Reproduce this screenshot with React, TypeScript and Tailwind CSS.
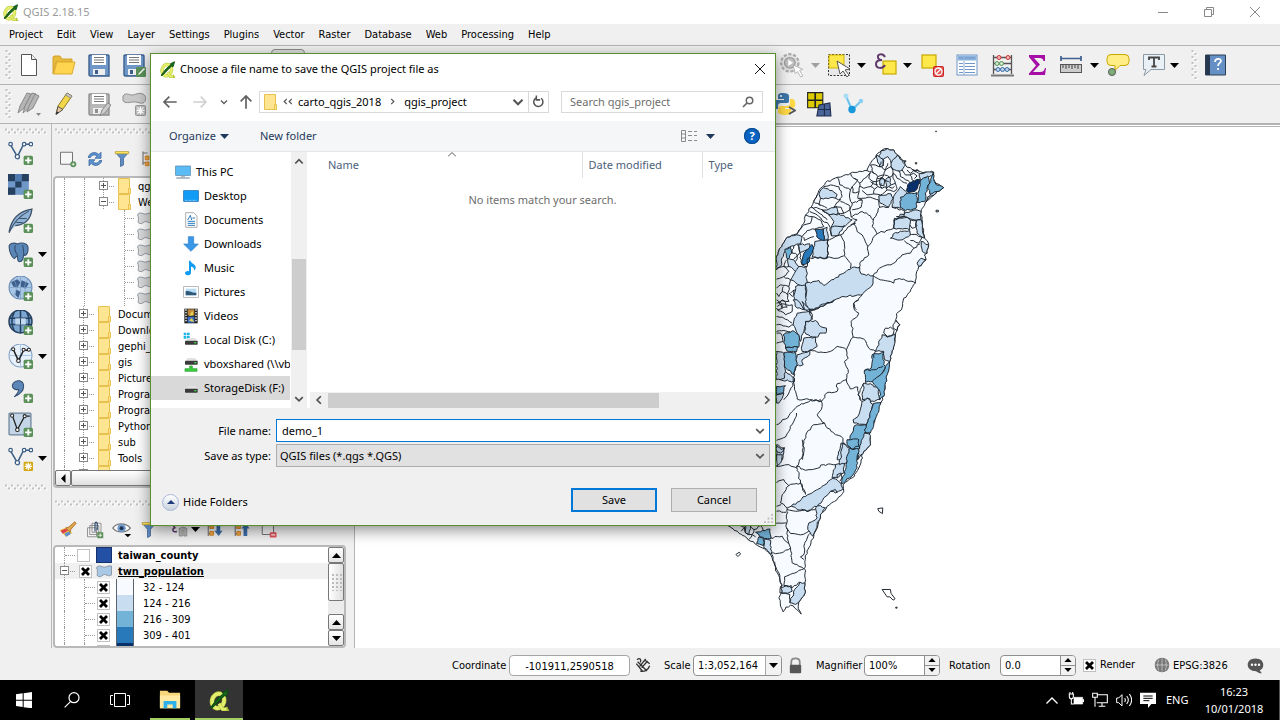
import React, { useState } from "react";

const TAHOMA = "font-['DejaVu_Sans_Condensed','DejaVu_Sans',sans-serif]";
const SEGOE = "font-['Noto_Sans','Open_Sans',sans-serif]";

type P = { children?: React.ReactNode; className?: string };

function Svg({ children, className = "size-6" }: P) {
  return (
    <svg viewBox="0 0 24 24" fill="none" className={className + " shrink-0"} aria-hidden="true">
      {children}
    </svg>
  );
}

function Plus() {
  return (
    <g>
      <rect x="15" y="15" width="9" height="9" rx="1.5" fill="#5b9158" />
      <path d="M19.5 16.5v6M16.5 19.5h6" stroke="#fff" strokeWidth="1.8" />
    </g>
  );
}

function GripV() {
  return (
    <svg className="h-[30px] w-[7px] shrink-0" viewBox="0 0 7 30" aria-hidden="true">
      <path d="M2.5 1v29M5.5 4v26" stroke="#fff" strokeWidth="2" strokeDasharray="2 4" />
      <path d="M1.5 0v30M4.5 3v27" stroke="#c2c2c2" strokeWidth="2" strokeDasharray="2 4" />
    </svg>
  );
}

function GripH({ className = "" }: P) {
  return (
    <svg className={"h-[7px] shrink-0 " + className} aria-hidden="true">
      <line x1="1" y1="2.5" x2="400" y2="2.5" stroke="#fff" strokeWidth="2" strokeDasharray="2 4" />
      <line x1="4" y1="5.5" x2="400" y2="5.5" stroke="#fff" strokeWidth="2" strokeDasharray="2 4" />
      <line x1="0" y1="1.5" x2="400" y2="1.5" stroke="#c2c2c2" strokeWidth="2" strokeDasharray="2 4" />
      <line x1="3" y1="4.5" x2="400" y2="4.5" stroke="#c2c2c2" strokeWidth="2" strokeDasharray="2 4" />
    </svg>
  );
}

function Caret({ className = "text-black" }: P) {
  return (
    <svg viewBox="0 0 9 5" className={"h-[5px] w-[9px] shrink-0 " + className} aria-hidden="true">
      <path d="M0 0h9L4.500 5z" fill="currentColor" />
    </svg>
  );
}

function Chevron({ dir, className = "size-2" }: { dir: "up" | "down" | "left" | "right"; className?: string }) {
  const d = {
    up: "M1 6l3-3 3 3",
    down: "M1 2.500l3 3 3-3",
    left: "M5.500 1l-3 3 3 3",
    right: "M2.500 1l3 3-3 3",
  }[dir];
  return (
    <svg viewBox="0 0 8 8" fill="none" className={className + " shrink-0"} aria-hidden="true">
      <path d={d} stroke="currentColor" strokeWidth="1.4" />
    </svg>
  );
}

function QgisLogo({ className = "size-4" }: P) {
  return (
    <Svg className={className}>
      <ellipse cx="11" cy="13" rx="6.500" ry="8" transform="rotate(15 11 13)" stroke="#b3c23c" strokeWidth="5" />
      <ellipse cx="11" cy="13" rx="6.500" ry="8" transform="rotate(15 11 13)" stroke="#e3ee6c" strokeWidth="3.800" />
      <path d="M12 16l4 6h4l-1-2" stroke="#b3c23c" strokeWidth="4" />
      <path d="M12 16l4 6h4" stroke="#e3ee6c" strokeWidth="2.800" />
      <path d="M3 20l1 1 9-9 5-5 2 1 2-7-6 3 1 1-7 6z" fill="#176b1c" stroke="#0d4d12" strokeWidth="1.200" />
    </Svg>
  );
}

function Folder({ className = "size-4" }: P) {
  return (
    <svg viewBox="0 0 16 16" className={className + " shrink-0"} aria-hidden="true">
      <path d="M1.500.5h11v11h1v4h-12z" fill="#ffe591" stroke="#e8c24f" />
      <path d="M11.500 15.500v-5h2v5z" fill="#ffe28a" stroke="#e8c24f" />
    </svg>
  );
}

/* ---------- toolbars ---------- */

const floppy = (c: string, d: string) => (
  <g>
    <path d="M2 3q0-1 1-1h18q1 0 1 1v20H3l-1-1z" fill={c} stroke={d} strokeWidth="1.4" />
    <path d="M5 2h14v10H5z" fill="#fff" />
    <path d="M7 4.500h10M7 7h10M7 9.500h10" stroke="#777" strokeWidth="1.200" />
    <path d="M6 16h12v6H6z" fill="#eee" />
    <path d="M8 17h3v4H8z" fill={d} />
  </g>
);

function ToolButton({ label, children, className = "w-[35px]" }: P & { label: string }) {
  return (
    <button type="button" aria-label={label} className={"flex shrink-0 items-center justify-center " + className}>
      {children}
    </button>
  );
}

function ToolbarOne() {
  return (
    <div className="flex h-[39px] items-center border-b border-[#b4b4b4] bg-[#f0f0f0] pl-[5px]">
      <GripV />
      <div className="-ml-px flex">
        <ToolButton label="New project">
          <Svg><path d="M4.500 1.500h10l5 5v16h-15z" fill="#fff" stroke="#555" /><path d="M14.500 1.500v5h5" stroke="#555" fill="#eee" /></Svg>
        </ToolButton>
        <ToolButton label="Open project">
          <Svg><path d="M1 21V4l1-1h6l2 3h10v3H4z" fill="#e9bb3c" stroke="#d4a22a" /><path d="M1.500 21L5 9h18l-3 12z" fill="#ffd44f" stroke="#dcaa30" /></Svg>
        </ToolButton>
        <ToolButton label="Save project"><Svg>{floppy("#6f97c8", "#3c5f8d")}</Svg></ToolButton>
        <ToolButton label="Save project as">
          <Svg>{floppy("#6f97c8", "#3c5f8d")}<rect x="14" y="14" width="10" height="10" rx="1" fill="#5b9158" /><path d="M16 22l1-2 5-5 1 1-5 5z" fill="#fff" /></Svg>
        </ToolButton>
      </div>
      <div className="ml-[120px] h-8 w-[34px] rounded border border-[#8c8c8c] bg-[#dcdcdc]" />
      <div className="flex flex-1 items-center pl-[473px]">
        <ToolButton label="Run feature action" className="w-7">
          <Svg className="size-[26px]">
            <circle cx="10" cy="10" r="8" fill="#e3e3e3" stroke="#aaa" strokeWidth="2" strokeDasharray="3 1.500" />
            <circle cx="10" cy="10" r="5" fill="#bdbdbd" stroke="#999" /><path d="M8.500 7l4.500 3-4.500 3z" fill="#fff" />
            <path d="M13 12l9 4-3 1 3 5-2 1-3-5-2 2z" fill="#fff" stroke="#aaa" strokeWidth=".8" />
          </Svg>
        </ToolButton>
        <span className="flex w-[18px] justify-center"><Caret className="text-[#a0a0a0]" /></span>
        <ToolButton label="Select features" className="w-[30px]">
          <Svg>
            <rect x="1.500" y="1.500" width="21" height="21" fill="#e8e8e8" stroke="#333" strokeDasharray="2 1.500" />
            <path d="M2 2h15v13H2z" fill="#ffe94a" stroke="#d3b300" />
            <path d="M10 8l13 8-5 1 4 5-2 2-4-6-3 3z" fill="#fff" stroke="#555" />
          </Svg>
        </ToolButton>
        <span className="flex w-[14px] justify-center"><Caret /></span>
        <ToolButton label="Select by expression" className="w-[35px]">
          <Svg>
            <rect x="9" y="8" width="13" height="13" fill="#ffe94a" stroke="#c9a800" strokeWidth="1.200" />
            <path d="M11 4C9 0 3 1 4 4c0 2 2 3 4 3-4 0-6 2-6 4 0 5 7 5 9 1" stroke="#5f3a6b" strokeWidth="2" />
          </Svg>
        </ToolButton>
        <span className="flex w-[9px] justify-center"><Caret /></span>
        <ToolButton label="Deselect features" className="w-10">
          <Svg>
            <rect x="2" y="2" width="14" height="13" fill="#ffe94a" stroke="#c9a800" strokeWidth="1.200" />
            <rect x="13.500" y="13.500" width="10" height="10" rx="1" fill="#e05252" stroke="#c22" /><circle cx="18.500" cy="18.500" r="3.500" stroke="#fff" strokeWidth="1.300" /><path d="M16 21l5-5" stroke="#fff" strokeWidth="1.300" />
          </Svg>
        </ToolButton>
        <ToolButton label="Open attribute table" className="w-[29px]">
          <Svg>
            <rect x="2" y="2" width="20" height="20" fill="#fff" stroke="#6f97c8" /><rect x="2.500" y="2.500" width="19" height="5" fill="#8db3dd" />
            <path d="M4 5h4M10 5h10M4 10.500h4M10 10.500h10M4 13.500h4M10 13.500h10M4 16.500h4M10 16.500h10M4 19.500h4M10 19.500h10" stroke="#6f97c8" strokeWidth="1.200" /><path d="M9 8v14" stroke="#6f97c8" strokeWidth=".8" />
          </Svg>
        </ToolButton>
        <ToolButton label="Field calculator" className="w-[41px]">
          <Svg>
            <path d="M3.500 2v19M21.500 2v19M3 4.500h19M3 10.500h19M3 16.500h19" stroke="#555" strokeWidth="1.300" /><path d="M1 21.500h23v2H1z" fill="#777" />
            <g fill="#f4b4b4" stroke="#c33"><circle cx="9" cy="4.500" r="2" /><circle cx="18" cy="4.500" r="2" /></g>
            <g fill="#cdeacd" stroke="#5a9557"><circle cx="7" cy="10.500" r="2" /><circle cx="11.500" cy="10.500" r="2" /></g>
            <g fill="#b9d3ee" stroke="#3c6ea8"><circle cx="8" cy="16.500" r="2" /><circle cx="12.500" cy="16.500" r="2" /><circle cx="17" cy="16.500" r="2" /></g>
          </Svg>
        </ToolButton>
        <ToolButton label="Statistical summary" className="w-[29px]">
          <Svg><path d="M4 2h16v6h-1.500c-.5-2-1.500-3-4-3H9l6 6.500L8 19h7c3 0 4-1 5-4h1l-1 7H4v-1.500l7-8L4 4z" fill="#a50fa5" /></Svg>
        </ToolButton>
        <ToolButton label="Measure" className="w-[39px]">
          <Svg>
            <path d="M2 5.500h20M2 3v5M22 3v5" stroke="#3c5f8d" strokeWidth="1.700" /><rect x="1.500" y="11.500" width="21" height="8" fill="#ccc" stroke="#555" />
            <path d="M4 12v3M7 12v4M10 12v3M13 12v4M16 12v3M19 12v4" stroke="#444" />
          </Svg>
        </ToolButton>
        <Caret />
        <ToolButton label="Map tips" className="w-[38px]">
          <Svg><path d="M5 1.500h14q4 0 4 4v3q0 4-4 4h-5l-5 5v-5H5q-4 0-4-4v-3q0-4 4-4z" fill="#ffed86" stroke="#c9a800" /><circle cx="6" cy="19" r="3.500" fill="#7cb07a" stroke="#555" /></Svg>
        </ToolButton>
        <ToolButton label="Text annotation" className="w-[33px]">
          <Svg><path d="M1.500 1.500h21v15H9l-7 6 2-6H1.500z" fill="#e9f1f7" stroke="#8a9aa5" /><path d="M7 7V4.500h10V7M12 4.500v9M9.500 13.500h5" stroke="#444" strokeWidth="1.800" /></Svg>
        </ToolButton>
        <Caret />
        <span className="ml-3"><GripV /></span>
        <ToolButton label="Help contents">
          <Svg><path d="M1.500 2h20v20h-20z" fill="#6590c5" stroke="#2d3e55" /><path d="M2 2h4v20H2z" fill="#26384f" /><path d="M11 9c0-4 6-4 6-1 0 2-3 2-3 5M14 15v2" stroke="#fff" strokeWidth="1.700" /></Svg>
        </ToolButton>
      </div>
    </div>
  );
}

function ToolbarTwo() {
  return (
    <div className="flex h-[39px] items-center border-b border-[#b4b4b4] bg-[#f0f0f0] pl-[5px]">
      <GripV />
      <div className="-ml-px flex">
        <ToolButton label="Current edits">
          <Svg><g fill="#b5b5b5" stroke="#8a8a8a"><path d="M1 21l2-7L10 1l4 1-7 14z" /><path d="M6 21l2-7 7-13 4 1-7 14z" /><path d="M10 20l2-6 6-12 4 2-6 12z" /></g><path d="M19 21h5l-2.500 3z" fill="#888" /></Svg>
        </ToolButton>
        <ToolButton label="Toggle editing">
          <Svg><path d="M4 22l2-8L15 1l5 3-9 13z" fill="#f2d64c" stroke="#8d7a22" /><path d="M4 22.500l2-8 5 3z" fill="#e8c8a0" stroke="#555" /><path d="M4 22.500l1-3 2 1z" fill="#222" /><path d="M15 1l5 3-1.500 2-5-3z" fill="#c9c9c9" stroke="#777" strokeWidth=".7" /></Svg>
        </ToolButton>
        <ToolButton label="Save layer edits">
          <Svg>{floppy("#b8b8b8", "#8f8f8f")}<path d="M13 24l2-6 6-7 3 2-6 8z" fill="#ccc" stroke="#888" /></Svg>
        </ToolButton>
        <ToolButton label="Add feature">
          <Svg><path d="M1 4c3-4 6-1 9-1s7-3 11-1 3 8 0 9-7-2-11-1S1 11 1 8z" fill="#c9c9c9" stroke="#8f8f8f" /><rect x="13.500" y="13.500" width="10" height="10" rx="1" fill="#bbb" stroke="#999" /><path d="M18.500 14.500v8M14.500 18.500h8M15.500 15.500l6 6M21.500 15.500l-6 6" stroke="#fff" strokeWidth="1.200" /></Svg>
        </ToolButton>
      </div>
      <div className="flex flex-1 items-center pl-[615px]">
        <ToolButton label="Python console">
          <Svg>
            <path d="M11 1C6 1 6 3 6 4v3h6v1H4c-4 0-4 9 0 9h2v-3c0-2 1-3 3-3h6c2 0 2-1 2-3V4c0-2-2-3-6-3z" fill="#3c76a8" /><circle cx="9" cy="4" r="1" fill="#fff" />
            <path d="M13 23c5 0 6-2 6-3v-3h-6v-1h8c3 0 3-8 0-9h-3v4c0 2-1 3-3 3H9c-2 0-3 1-3 3v3c0 2 3 3 7 3z" fill="#ffd845" />
            <path d="M17 15l6 3.500-6 3.500" stroke="#555" strokeWidth="1.800" />
          </Svg>
        </ToolButton>
        <ToolButton label="Table manager">
          <Svg className="size-[26px]"><path d="M1.500 1.500h14v14h-14z" fill="#dccb00" stroke="#222" /><path d="M8.500 1.500v14M1.500 8.500h14" stroke="#222" strokeWidth="1.500" /><path d="M12 13l10-2 1 12H10z" fill="#4a6597" stroke="#1d2c4d" /><path d="M17 12v11M11 17h12" stroke="#1d2c4d" /></Svg>
        </ToolButton>
        <ToolButton label="Topology">
          <Svg><path d="M4 4l6 14 9-9" stroke="#6cc3ee" strokeWidth="2" /><circle cx="4" cy="4" r="2.500" fill="#a9dcf5" /><circle cx="19" cy="9" r="2.200" fill="#8acff2" /><circle cx="10" cy="17.500" r="3.700" fill="#1897db" /></Svg>
        </ToolButton>
      </div>
    </div>
  );
}

const vNodes = (
  <g>
    <path d="M2 4l7 12 6-12h8" stroke="#3d5f86" strokeWidth="1.500" />
    <g fill="#fff" stroke="#3d5f86" strokeWidth="1.200"><circle cx="2.500" cy="4" r="1.700" /><circle cx="9" cy="16" r="2" /><circle cx="15.500" cy="4" r="1.700" /><circle cx="22" cy="4" r="1.700" /></g>
  </g>
);

const sideTools: { label: string; caret?: boolean; art: React.ReactNode }[] = [
  { label: "Add vector layer", art: <>{vNodes}<Plus /></> },
  { label: "Add raster layer", art: <><path d="M0 0h20v20H0z" fill="#6f97c8" /><path d="M0 0h7v7H0zM13 0h7v7h-7zM7 7h6v6H7zM0 13h7v7H0z" fill="#26405f" /><path d="M7 0h6v7H7z" fill="#4f7aaf" /><Plus /></> },
  { label: "Add SpatiaLite layer", art: <><path d="M1 23C3 12 9 3 23 1c-1 9-5 15-16 16" fill="#8fb2d8" stroke="#3c5066" strokeWidth="1.200" /><path d="M1 24C5 14 12 7 20 3M8 14h6M11 10h7" stroke="#3c5066" /><Plus /></> },
  { label: "Add PostGIS layer", caret: true, art: <><path d="M1 4c1-4 6-3 8-2 4-2 9-1 10 2 1 5-1 9-3 9l-1-2c0 5-1 8-4 8-2 0-2-3-2-6l-3 3C3 14 1 8 1 4z" fill="#5a86b8" stroke="#34506f" /><path d="M7 3c-1 4 0 7 2 9M14 3c1 3 1 6 1 8" stroke="#34506f" /><Plus /></> },
  { label: "Add WMS layer", caret: true, art: <><circle cx="12" cy="11" r="11" fill="#a8c6e6" stroke="#6486ad" /><path d="M3 6l6-3 3 3-3 5-4-1zM13 4l7 3-3 5-5-2zM8 13l4 2-2 6-3-3z" fill="#3c5f8d" /><path d="M12 0v22M1 11h22M5 3c4 5 4 11 0 16M19 3c-4 5-4 11 0 16" stroke="#7f9fc4" strokeWidth=".7" /><Plus /></> },
  { label: "Add WCS layer", art: <><circle cx="12" cy="11" r="11" fill="#7ea6d2" stroke="#26405f" strokeWidth="1.500" /><path d="M1 8h22M1 14h22M12 0v22M6 2c-3 6-3 12 0 18M18 2c3 6 3 12 0 18" stroke="#26405f" strokeWidth="1.500" /><path d="M7 8h10v6H7z" fill="#c3d9ef" /><path d="M12 8v6" stroke="#26405f" /><Plus /></> },
  { label: "Add WFS layer", caret: true, art: <><circle cx="12" cy="11" r="11" fill="#e8f1fa" stroke="#7f9fc4" /><path d="M12 0v22M1 11h22" stroke="#a8c6e6" /><path d="M5 5l5 11 5-10h4" stroke="#222" strokeWidth="1.500" /><g fill="#fff" stroke="#222"><circle cx="5" cy="5" r="1.500" /><circle cx="10" cy="16" r="1.700" /><circle cx="15" cy="5.500" r="1.500" /><circle cx="20" cy="5.500" r="1.500" /></g><Plus /></> },
  { label: "Add delimited text layer", art: <><path d="M5 5c3-4 10-3 10 3 0 5-4 8-9 10 3-3 5-5 4-7-5 1-7-3-5-6z" fill="#5a86b8" stroke="#34506f" /><Plus /></> },
  { label: "Add virtual layer", art: <><rect x="1" y="1" width="21" height="21" rx="1" fill="#c3d5e6" stroke="#6b8299" strokeWidth="1.200" /><path d="M4 3l5 14 7-13h5" stroke="#222" strokeWidth="1.300" /><g fill="#fff" stroke="#222"><circle cx="4" cy="3.500" r="1.500" /><circle cx="9" cy="17" r="1.700" /><circle cx="16" cy="4" r="1.500" /></g><Plus /></> },
  { label: "New shapefile layer", caret: true, art: <>{vNodes}<rect x="15" y="15" width="9" height="9" rx="1" fill="#d3a815" /><path d="M19.500 16v7M16 19.500h7M17 17l5 5M22 17l-5 5" stroke="#fff" strokeWidth="1.200" /></> },
];

function SideTools() {
  return (
    <div className="flex w-[52px] shrink-0 flex-col border-r border-[#b9b9b9] pt-[4px]">
      <GripH className="ml-[5px] w-[42px]" />
      <div className="flex flex-col">
        {sideTools.map((t) => (
          <button key={t.label} type="button" aria-label={t.label} className="flex h-[34px] items-center gap-[5px] pl-2">
            <Svg className="size-[25px]">{t.art}</Svg>
            {t.caret && <Caret />}
          </button>
        ))}
      </div>
      <GripH className="mt-[9px] ml-[5px] w-[42px]" />
    </div>
  );
}

/* ---------- panels ---------- */

function Expander({ open }: { open?: boolean }) {
  return (
    <svg viewBox="0 0 20 16" className="h-4 w-5 shrink-0" fill="none" aria-hidden="true">
      <rect x="1.500" y="3.500" width="8" height="8" fill="#fff" stroke="#8a8a8a" />
      <path d={open ? "M3 7.500h5" : "M3 7.500h5M5.500 5v5"} stroke="#555" />
      <path d="M11 8.500h6M5.500 12v4M5.500 0v3" stroke="#999" strokeDasharray="1 1" />
    </svg>
  );
}

function Blob({ className = "text-[#d8d8d8]" }: P) {
  return (
    <svg viewBox="0 0 16 13" className={"h-[13px] w-4 shrink-0 " + className} aria-hidden="true">
      <path d="M.5 3c1-3 4-2 6.500-1s5-2 8.500-1v9c-3 2-5-.5-7-.5s-3 3-6 2 .5-4.500-2-8.500z" fill="currentColor" stroke="#7c8894" strokeWidth=".8" />
    </svg>
  );
}

const folders = ["Documents", "Downloads", "gephi_", "gis", "Pictures", "Program Files", "Program Files", "Python", "sub", "Tools"];

const filterArt = (
  <g><path d="M3 3h18l-7 8v9l-4 2V11z" fill="#5f8fc4" stroke="#3c5f8d" /><path d="M3 2h18v3H3z" fill="#ffe25a" stroke="#b59b2e" strokeWidth=".8" /></g>
);

function ScrollArrow({ dir }: { dir: "up" | "down" | "left" }) {
  const rot = { up: "M0 5h9L4.500 0z", down: "M0 0h9L4.500 5z", left: "M6.500-2v9L2 2.500z" }[dir];
  return (
    <button type="button" aria-label={"Scroll " + dir} className="flex size-4 shrink-0 items-center justify-center rounded-xs border border-[#777] bg-linear-to-b from-white to-[#e4e4e4]">
      <svg viewBox="0 0 9 5" className="h-[5px] w-[9px] overflow-visible"><path d={rot} /></svg>
    </button>
  );
}

function BrowserPanel() {
  return (
    <section aria-label="Browser" className="flex flex-col pt-[4px]">
      <GripH className="ml-[3px] w-[286px]" />
      <div className="flex h-[41px] items-end gap-[3px] pb-2 pl-1">
        <ToolButton label="Add selected layers" className="w-6"><Svg className="size-[18px]"><path d="M2 3h16v16H2z" fill="#f6f6f6" stroke="#666" strokeWidth="1.200" /><circle cx="19" cy="19" r="4" fill="#5b9158" /><path d="M19 17v4M17 19h4" stroke="#fff" /></Svg></ToolButton>
        <ToolButton label="Refresh" className="w-6"><Svg className="size-[18px]"><path d="M3 10c1-6 9-9 14-4l3-3v8h-8l3-3c-4-3-8-1-9 2zM21 14c-1 6-9 9-14 4l-3 3v-8h8l-3 3c4 3 8 1 9-2z" fill="#5f95d2" stroke="#31609a" /></Svg></ToolButton>
        <ToolButton label="Filter browser" className="w-6"><Svg className="size-[18px]">{filterArt}</Svg></ToolButton>
        <ToolButton label="Collapse all" className="w-6"><Svg className="size-[18px]"><path d="M4 2v18M4 4h6M4 17h6" stroke="#777" strokeWidth="1.500" /><path d="M7 8h5v5H7zM7 16h5v5H7z" fill="#f4a742" stroke="#c87a17" /><path d="M18 20V9h-3l5-6 4 6h-3v11z" fill="#3c6ea8" /></Svg></ToolButton>
      </div>
      <div className="mr-[2px] ml-px h-[312px] overflow-hidden rounded border-2 border-[#b9b9b9] bg-white">
        <ul className="h-[292px] overflow-hidden">
          {["qgis", "We"].map((n, i) => (
            <li key={n} className="flex h-4 items-center pl-[9px]">
              <span className="mr-[13px] h-4 w-[21px] shrink-0 border-r border-l border-dotted border-[#999]" />
              <Expander open={i === 1} /><Folder className="-ml-px size-4" /><span className="ml-[5px] pt-0.5">{n}</span>
            </li>
          ))}
          {[0, 1, 2, 3, 4, 5].map((n) => (
            <li key={n} className="flex h-4 items-center pl-[9px]">
              <span className="mr-[39px] h-4 w-[21px] shrink-0 border-r border-l border-dotted border-[#999]" />
              <span className="flex h-4 w-[10px] shrink-0 items-center border-l border-dotted border-[#999]"><span className="w-full border-t border-dotted border-[#999]" /></span>
              <Blob className="ml-[3px] text-[#dcdcdc]" />
            </li>
          ))}
          {[...folders, ""].map((n, i) => (
            <li key={i} className="flex h-4 items-center pl-[9px]">
              <span className="mr-[13px] h-4 w-px shrink-0 border-l border-dotted border-[#999]" />
              <Expander /><Folder className="-ml-px size-4" /><span className="ml-[5px] pt-0.5 whitespace-nowrap">{n}</span>
            </li>
          ))}
        </ul>
        <div className="flex bg-[#ececec]">
          <ScrollArrow dir="left" />
          <div className="h-4 flex-1 rounded-xs border border-[#777] bg-linear-to-b from-white to-[#e0e0e0]" />
        </div>
      </div>
    </section>
  );
}

function XBox({ label, defaultChecked = true }: { label: string; defaultChecked?: boolean }) {
  return (
    <span className="relative flex size-[13px] shrink-0">
      <input type="checkbox" aria-label={label} defaultChecked={defaultChecked} className="peer size-[13px] appearance-none border border-[#c0c0c0] bg-white" />
      <svg viewBox="0 0 13 13" className="pointer-events-none absolute inset-0 hidden size-[13px] peer-checked:block"><path d="M3 3l7 7M10 3l-7 7" stroke="#000" strokeWidth="2.800" /></svg>
    </span>
  );
}

const classes = [
  { label: "32 - 124", color: "bg-[#f7fbff]" },
  { label: "124 - 216", color: "bg-[#c8ddf0]" },
  { label: "216 - 309", color: "bg-[#73b3d8]" },
  { label: "309 - 401", color: "bg-[#2879b9]" },
  { label: "", color: "bg-[#08306b]" },
];

function LayersPanel() {
  return (
    <section aria-label="Layers" className="flex flex-col pt-[12px]">
      <GripH className="ml-[3px] w-[286px]" />
      <div className="flex h-[38px] items-end gap-[3px] pb-[6px] pl-1">
        <ToolButton label="Open layer styling" className="w-6"><Svg className="size-[18px]"><path d="M1 12l8-3 9 7-9 5z" fill="#f2c84b" /><path d="M2 13l7-3 3 3-7 4z" fill="#d9434b" /><path d="M7 17l6-3 3 3-6 4z" fill="#5a8fd0" /><path d="M9 9l4-1 8-7 2 2-7 8-1 4z" fill="#e0a34e" stroke="#a56a1d" /></Svg></ToolButton>
        <ToolButton label="Add group" className="w-6"><Svg className="size-[18px]"><path d="M2 9h12v12H2zM5 6h12v12H5zM8 3h12v12H8z" fill="#f2f2f2" stroke="#777" /><path d="M12 14V3q2-3 3 0v9" stroke="#34506f" strokeWidth="1.600" /><rect x="15" y="15" width="8" height="8" fill="#5b9158" /><path d="M19 16.500v5M16.500 19h5" stroke="#fff" /></Svg></ToolButton>
        <ToolButton label="Manage layer visibility" className="w-6"><Svg className="size-5"><path d="M1 11C5 4 17 4 22 11c-5 6-16 6-21 0z" fill="#fff" stroke="#777" strokeWidth="1.500" /><circle cx="11.500" cy="11" r="5" fill="#6f97c8" /><circle cx="11.500" cy="11" r="2.300" fill="#1e3552" /><path d="M15 18h8l-4 4z" fill="#000" /></Svg></ToolButton>
        <ToolButton label="Filter legend" className="w-6"><Svg className="size-[18px]">{filterArt}</Svg></ToolButton>
        <ToolButton label="Filter by expression" className="ml-1 w-6"><Svg className="size-[18px]"><path d="M9 5C3 3 2 8 6 9c-5 0-5 7 2 5" stroke="#5f3a6b" strokeWidth="2" /><path d="M11 10q5-4 10 0v10h-4v-7h-2v7h-4z" fill="#bbb" stroke="#888" /></Svg></ToolButton>
        <span className="-mx-1 flex h-5 items-center"><Caret /></span>
        <ToolButton label="Expand all" className="ml-1 w-6"><Svg className="size-[18px]"><path d="M3 2v18M3 4h6M3 17h6" stroke="#777" strokeWidth="1.500" /><path d="M5 5h5v5H5zM5 14h5v5H5z" fill="#f4a742" stroke="#c87a17" /><path d="M14 3v10h-3l6 7 5-7h-3V3z" fill="#3c6ea8" /></Svg></ToolButton>
        <ToolButton label="Collapse all layers" className="w-6"><Svg className="size-[18px]"><path d="M3 2v18M3 4h6M3 17h6" stroke="#777" strokeWidth="1.500" /><path d="M5 5h5v5H5zM5 14h5v5H5z" fill="#f4a742" stroke="#c87a17" /><path d="M14 20V10h-3l6-7 5 7h-3v10z" fill="#3c6ea8" /></Svg></ToolButton>
        <ToolButton label="Remove layer" className="w-6"><Svg className="size-[18px]"><path d="M3 3h15v15H3z" fill="#f6f6f6" stroke="#666" strokeWidth="1.200" /><rect x="13" y="15" width="9" height="7" rx="1" fill="#e0525a" /><path d="M15 18.500h5" stroke="#fff" strokeWidth="1.500" /></Svg></ToolButton>
      </div>
      <div className="mr-[8px] ml-px flex h-[103px] overflow-hidden rounded border-2 border-[#b9b9b9] bg-white">
        <ul className="h-full min-w-0 flex-1 overflow-hidden">
          <li className="flex h-4 items-center pl-[9px]">
            <span className="flex h-4 w-[13px] items-center border-l border-dotted border-[#999]"><span className="w-[10px] border-t border-dotted border-[#999]" /></span>
            <XBox label="taiwan_county" defaultChecked={false} />
            <span className="ml-[6px] h-4 w-4 border border-[#16306b] bg-[#2350a5]" />
            <span className="ml-[6px] pt-0.5 font-bold">taiwan_county</span>
          </li>
          <li className="flex h-4 items-center bg-[#f0f0f0] pl-[4px]">
            <Expander open /><XBox label="twn_population" />
            <Blob className="-ml-0.5 text-[#a8c8e6] [margin-left:4px]" />
            <span className="ml-[6px] pt-0.5 font-bold underline">twn_population</span>
          </li>
          {classes.map((c) => (
            <li key={c.color} className="flex h-4 items-center pl-[9px]">
              <span className="h-4 w-[20px] border-l border-dotted border-[#999]" />
              <span className="flex h-4 w-[13px] items-center border-l border-dotted border-[#999]"><span className="w-[10px] border-t border-dotted border-[#999]" /></span>
              <XBox label={c.label || "401 and over"} />
              <span className={"ml-[6px] h-4 w-[18px] border-r border-l border-[#5a6570] " + c.color} />
              <span className="ml-[9px] pt-0.5">{c.label}</span>
            </li>
          ))}
        </ul>
        <div className="flex w-4 flex-col bg-[#ececec]">
          <ScrollArrow dir="up" />
          <div className="flex h-[38px] items-center justify-center rounded-xs border border-[#777] bg-linear-to-r from-white to-[#e0e0e0]">
            <span className="h-[18px] w-[11px] bg-[radial-gradient(#bbb_1px,transparent_1px)] bg-[size:4px_4px]" />
          </div>
          <div className="flex-1" />
          <ScrollArrow dir="up" /><ScrollArrow dir="down" />
        </div>
      </div>
    </section>
  );
}

/* ---------- map ---------- */

const coast =
  "140,430 168,410 185,375 200,352 228,342 250,310 255,285 272,262 290,225 300,205 315,188 350,172 390,160 440,152 450,130 468,105 485,90 502,86 520,90 530,105 550,122 555,135 575,148 600,155 640,157 638,175 647,190 670,203 650,215 635,230 615,248 602,275 605,300 610,330 613,355 625,375 620,400 612,405 617,420 595,440 587,465 585,490 570,515 550,535 543,570 528,582 526,600 538,615 530,632 524,655 520,680 508,725 500,760 493,810 487,840 475,860 465,890 455,925 447,940 450,975 430,995 415,1045 395,1075 368,1095 370,1115 350,1140 320,1160 300,1185 295,1205 280,1250 262,1290 253,1325 253,1390 254,1420 235,1448 233,1460 242,1484 228,1470 210,1457 196,1463 188,1477 180,1460 175,1435 185,1415 183,1395 175,1360 160,1330 150,1305 125,1285 90,1265 50,1235 22,1218 0,1200 140,1180";

type Sheet = { dx: number; dy: number; light: string[]; mid: string[]; strong: string[]; navy: string[]; lines: string[] };

const sheets: Sheet[] = [
  {
    dx: 150,
    dy: 0,
    light: [
      "332,92 352,86 370,90 382,105 378,125 362,130 352,110 338,118 325,108", "362,130 380,106 405,135 395,150 378,152 362,140", "318,105 340,120 338,138 328,140",
      "447,160 490,157 486,168 465,172 450,186", "158,203 185,212 200,224 195,235 150,235 145,222", "155,272 198,260 203,280 178,285",
      "175,285 205,282 245,300 225,318 182,325 190,305", "182,322 222,318 205,345 183,348", "325,228 362,222 368,235 355,262 330,250",
      "372,225 390,200 410,218 390,265 365,262 368,240", "372,295 410,292 420,300 418,330 370,325", "360,355 375,338 418,332 420,345 395,360",
      "378,290 420,275 440,270 453,275 452,298 432,300 410,292", "440,300 453,300 462,355 440,340 436,320", "452,365 475,375 470,400 456,395",
      "440,430 452,415 467,420 445,440", "470,240 485,215 500,215 465,248", "18,410 35,375 50,352 78,345 95,350 90,372 70,378 50,385 40,400 30,440 18,450",
      "82,375 118,372 115,390 88,398", "133,365 158,358 173,360 170,415 125,412 128,385", "158,327 170,322 172,358 160,362", "50,415 70,420 85,440 80,460 55,440",
      "60,480 85,440 108,440 110,500 85,495", "105,490 145,482 160,497 220,460 245,443 268,443 272,462 308,468 308,490 275,525 215,530 190,542 165,555 145,565 122,572 100,560 108,520",
      "75,500 105,495 105,545 120,580 80,550 70,530", "345,180 358,172 362,195 348,205", "330,175 342,178 340,198 328,195",
    ],
    mid: ["390,232 410,220 440,218 437,265 405,272 390,262", "447,205 452,180 472,168 478,190 470,205 462,245 440,248", "472,205 488,160 492,185 498,195 520,203 500,215 478,222", "43,388 60,382 63,400 52,418"],
    strong: ["133,328 158,327 160,362 143,355", "95,435 100,400 125,374 130,385 112,430"],
    navy: ["408,212 418,188 432,183 448,178 448,190 438,210 415,218"],
    lines: [
      "200,172 208,195 240,210 238,235 245,250", "240,160 250,175 262,180 245,200 240,210", "205,200 215,230 205,245 190,262", "160,200 180,195 200,200 205,200", "122,262 150,268 175,285", "118,275 145,290 175,315 183,348",
      "125,262 140,275 155,285 170,300", "105,285 125,290 120,310 100,315", "125,290 150,300 160,320 133,328", "250,175 268,190 266,215 247,218 245,200", "266,190 290,170 300,158 295,175 308,185 300,200 280,205 266,200",
      "290,152 310,160 322,170 318,185 308,185", "310,160 300,135 325,140 345,150 340,165 322,170", "345,150 362,140 368,160 358,172 342,165", "300,200 312,208 322,200 318,185 330,180", "312,208 310,222 290,225 275,212", "322,200 335,205 345,200 350,210 330,225 310,222",
      "350,210 370,215 380,205 375,190 362,195", "368,160 380,175 395,185 410,190", "375,190 368,175 368,160", "330,180 340,165", "335,205 332,190", "320,175 335,172 345,182 355,185", "300,185 310,192 322,195", "355,200 365,205 372,200",
      "385,152 390,170 405,180 418,188", "395,150 405,165 418,165 425,180 432,183", "410,150 420,160 430,150 445,160", "418,165 430,160 440,168 432,176", "425,148 435,156 440,148 446,155",
      "245,250 238,270 242,290", "210,245 235,255 238,270 220,280 203,280", "245,250 275,240 262,235 266,215", "190,262 212,262 220,280", "275,240 272,262 245,270",
      "242,290 260,300 250,312 260,335 275,345 292,380 297,375 310,350 320,342 305,320 310,295 328,262 355,262", "365,262 402,272 400,290 370,300 370,325 355,330 320,342", "266,235 300,232 325,240 328,262", "242,290 275,275 300,288 308,300",
      "210,345 240,318 255,310", "210,345 222,375 222,408 242,432 240,445", "292,380 295,405 268,430 265,445", "308,468 322,450 350,435 370,430 395,405 420,400 430,385 415,372 402,362", "308,468 330,480 370,490 372,480 400,478 435,490",
      "112,415 150,412 200,415 220,408", "112,415 110,440", "172,360 210,345", "170,415 173,360", "275,525 250,550 258,570", "420,300 438,302 440,318 425,325 418,315", "418,345 440,345 455,352 445,370 420,362", "430,385 450,372", "240,315 255,310", "195,235 212,240", "150,235 145,255 170,265",
      "140,225 130,245 150,255", "95,350 110,332 133,328", "100,352 102,362 130,350", "70,378 65,400 80,405 75,425", "88,398 95,435 110,440", "18,445 40,440 55,455 40,470 18,478", "40,470 60,480 55,500 30,495 18,505", "55,500 52,525 35,515 25,530 18,520", "35,515 38,500", "52,525 55,545 35,540 18,550", "60,520 72,510 65,530 55,520", "20,560 32,552 34,566 22,570", "55,440 40,440 48,420",
      "78,345 95,320 100,315", "82,375 88,398 70,418", "338,118 338,138", "325,140 332,125", "345,150 352,130",
    ],
  },
  {
    dx: 0,
    dy: 540,
    light: [
      "218,0 230,0 252,30 230,25", "252,30 245,5 272,30 340,0 295,25", "230,40 268,35 272,60 255,65 250,95 240,125 230,100 218,75", "255,65 285,62 300,80 318,85 316,100 298,100 292,112 270,110 252,95", "250,115 285,112 290,140 268,152 245,155 245,135",
      "168,155 190,160 195,215 222,235 222,245 168,240", "230,165 268,152 268,165 245,180 248,195 225,200", "485,105 500,112 523,103 520,140 508,185 492,180 490,155 465,155", "430,250 450,252 475,268 478,300 450,305 440,295 425,300", "425,305 440,296 458,315 448,345 438,375 400,370 398,360 415,345",
      "420,410 430,400 447,403 450,435 430,455 412,480", "362,430 392,440 385,480 350,480", "168,435 190,445 186,480 168,480", "168,285 190,280 175,310 168,310",
    ],
    mid: ["188,105 215,93 235,105 235,142 195,145", "195,145 232,142 228,156 200,154", "192,158 225,158 230,190 220,225 192,200", "168,260 195,258 188,280 168,285", "455,165 490,158 488,180 495,200 488,215 460,245 435,248 432,212 452,205", "508,185 490,290 478,300 478,275 455,245 488,218 495,200", "458,312 482,308 468,350 450,400 430,398 438,375 448,345", "402,378 437,375 430,410 412,450 380,430 395,400", "385,452 412,448 410,480 380,480"],
    strong: [],
    navy: [],
    lines: [
      "415,0 400,10 402,30 415,40 392,65 398,112 382,140 378,150 350,140 330,155 295,158 268,150", "272,32 275,60", "398,112 430,118 445,145 465,155 460,175", "378,150 383,175 372,185 383,210 378,240 390,268 412,262 418,300 425,305", "378,240 350,252 350,275 318,280 303,305 275,300 230,298 222,270 220,220 225,200",
      "300,300 305,320 290,345 312,370 320,385 345,405 362,410 372,435", "312,370 280,375 258,400 250,430 246,480", "168,375 195,358 230,320 270,302 300,300", "228,340 205,395 195,412 168,422", "168,25 195,45 215,35 215,15 185,12 168,0", "168,75 205,82 218,75", "168,50 185,52 215,70",
      "168,95 190,92 210,96", "168,100 180,100 188,125 168,130", "495,85 510,82 521,92 518,105 500,110 490,100 495,85", "518,75 525,62 538,75 530,92 518,85 518,75", "432,212 460,210 488,200", "430,250 412,285 420,300", "195,215 192,235 175,240", "190,300 205,280 222,245", "168,440 182,450 192,444 180,460 168,456", "175,10 182,2 195,8 200,22 185,25 175,10",
    ],
  },
  {
    dx: 0,
    dy: 960,
    light: ["212,200 262,165 300,145 330,120 345,118 362,132 368,148 345,160 330,155 310,175 302,190 265,215 230,210", "345,75 372,72 370,100 360,105 350,115 335,115", "365,12 390,25 378,70 357,75 362,45", "285,205 300,198 315,205 300,225 290,255 278,290 262,270 265,250 290,235", "180,445 212,438 215,455 185,462", "208,490 222,450 238,428 253,430 254,460 235,488 225,495", "168,45 185,45 180,70 168,80", "130,298 150,302 152,345 130,325", "75,258 90,258 85,285 75,280"],
    mid: ["380,0 415,0 415,20 395,28 380,15", "385,28 414,28 410,85 392,112 362,132 375,90", "105,278 148,268 150,298 118,292", "115,292 130,298 128,318 108,312"],
    strong: [],
    navy: [],
    lines: [
      "245,0 248,40 228,80 240,130 255,160", "228,80 255,92 275,90 310,75 345,75", "168,80 205,75 228,85", "168,130 190,120 205,138 240,130 255,165", "205,138 185,165 180,190 200,205 212,200", "200,205 198,265 210,282 240,286 265,275", "200,210 230,215 265,212 285,210", "168,215 198,218", "150,255 198,250", "168,200 182,195",
      "150,295 185,290 190,300 205,312 210,325 195,332 182,340 152,340", "205,312 200,295 198,265", "210,325 215,370 250,388", "190,438 192,412 215,402 250,388", "190,438 215,445 238,428", "268,282 250,320 252,340 240,352 250,360", "350,115 350,105 362,100 365,115 358,125", "330,155 345,150 350,160", "180,440 178,460 195,462 208,465 208,490",
      "50,258 72,262 62,275", "72,262 75,280 95,285 100,270 88,258", "85,300 95,285 105,292", "100,270 120,258 128,272", "155,345 165,385 178,420 185,440", "130,318 128,300",
    ],
  },
];

const islets = ["472,1167 487,1165 486,1182 475,1175", "485,1410 510,1410 512,1422 524,1438 518,1442 508,1432 500,1432", "526,1463 530,1463 530,1466 526,1466", "46,1305 56,1298 60,1303 52,1311", "646,33 648,33 648,35 646,35", "585,128 589,128 589,132 585,132", "552,122 556,122 556,126 552,126", "647,271 654,271 654,276 647,276"];

/* Position-based noise, so that borders shared by two districts wobble alike. */
const noise = (x: number, y: number, k: number) => {
  const v = Math.sin(Math.round(x / 5) * 12.9898 + Math.round(y / 5) * 78.233 + k) * 43758.5453;
  return (v - Math.floor(v) - 0.5) * 5.5;
};

function wobble(points: string, dx: number, dy: number, closed: boolean) {
  const pts = points.split(" ").map((p) => p.split(",").map(Number));
  if (closed) pts.push(pts[0]);
  const out: string[] = [];
  pts.forEach(([x, y], i) => {
    out.push(`${x + dx},${y + dy}`);
    const next = pts[i + 1];
    if (!next) return;
    const n = Math.floor(Math.hypot(next[0] - x, next[1] - y) / 7);
    for (let s = 1; s < n; s++) {
      const px = x + ((next[0] - x) * s) / n + dx;
      const py = y + ((next[1] - y) * s) / n + dy;
      out.push(`${(px + noise(px, py, 1)).toFixed(1)},${(py + noise(px, py, 2)).toFixed(1)}`);
    }
  });
  return out.join(" ");
}

function MapCanvas() {
  const layers: ["light" | "mid" | "strong" | "navy", string][] = [["light", "#c8ddf0"], ["mid", "#73b3d8"], ["strong", "#2879b9"], ["navy", "#08306b"]];
  return (
    <svg viewBox="0 0 926 521" preserveAspectRatio="xMinYMin meet" className="block size-full" role="img" aria-label="Taiwan population map">
      <g transform="translate(366 -7) scale(0.33333)" stroke="#1c242e" strokeWidth="2.900" strokeLinejoin="round">
        <polygon points={wobble(coast, 0, 0, true)} fill="#f7fbff" />
        {sheets.map((s) => (
          <g key={s.dx + "-" + s.dy}>
            {layers.map(([k, color]) => s[k].map((pts) => <polygon key={pts} points={wobble(pts, s.dx, s.dy, true)} fill={color} />))}
            {s.lines.map((pts) => <polyline key={pts} points={wobble(pts, s.dx, s.dy, false)} fill="none" />)}
          </g>
        ))}
        {islets.map((pts) => <polygon key={pts} points={pts} fill="#fff" />)}
      </g>
    </svg>
  );
}

/* ---------- dialog ---------- */

const disk = (extra?: React.ReactNode) => (
  <g>{extra}<path d="M4 13l3-4h11l4 4z" fill="#e2e2e2" /><rect x="3" y="13" width="19" height="6" rx="1" fill="#3a3a3a" /><rect x="17" y="15" width="3" height="2" fill="#3fe04f" /></g>
);

const places: { name: string; root?: boolean; active?: boolean; art: React.ReactNode }[] = [
  { name: "This PC", root: true, art: <><rect x="1" y="3" width="22" height="14" fill="#5bbcf5" stroke="#4a7fa5" /><path d="M9 18h6v2H9z" fill="#bbb" /><path d="M2 21h20" stroke="#8a9fb0" strokeWidth="2" /></> },
  { name: "Desktop", art: <><rect x="1" y="4" width="22" height="16" fill="#129cf5" stroke="#0b63ad" /><path d="M3 18.500h18" stroke="#fff" strokeDasharray="1 1" /></> },
  { name: "Documents", art: <><path d="M4 1h12l5 5v17H4z" fill="#fff" stroke="#888" /><path d="M7 12l4-7 2 7M14 9h4M7 14h11M7 17h11M7 20h11" stroke="#2f7cc0" strokeWidth="1.500" /></> },
  { name: "Downloads", art: <path d="M8 1h8v11h7L12 23 1 12h7z" fill="#3b97e8" stroke="#2b7ecb" /> },
  { name: "Music", art: <><path d="M11 1c2 5 8 5 8 10 0 3-1 4-2 5 0-5-3-6-5-6v9c0 3-3 4-5 4-3 0-4-2-4-3 0-3 4-4 6-3V1z" fill="#119cf2" /></> },
  { name: "Pictures", art: <><rect x="1" y="4" width="22" height="16" fill="#fff" stroke="#999" /><path d="M4 7h16v10H4z" fill="#b9dcf5" /><path d="M4 11c5-2 9 3 16 2v4H4z" fill="#2c5a78" /></> },
  { name: "Videos", art: <><path d="M2 1h20v22H2z" fill="#222" /><path d="M7 2h10v9H7z" fill="#c08a3c" /><path d="M7 13h10v9H7z" fill="#3c6ec8" /><path d="M9 12l5-8 2 7zM9 19l4-4 4 6z" fill="#e6d050" /><path d="M4.500 2v20M19.500 2v20" stroke="#fff" strokeWidth="2" strokeDasharray="2 2" /></> },
  { name: "Local Disk (C:)", art: disk(<path d="M1 1h4v4H1zM6 1h4v4H6zM1 6h4v4H1zM6 6h4v4H6z" fill="#19b4ea" />) },
  { name: "vboxshared (\\\\vb", art: <><g transform="translate(0 -6)">{disk()}</g><path d="M10 15h4v4h7v4H3v-4h7z" fill="#3ccf3f" stroke="#1f9a27" /></> },
  { name: "StorageDisk (F:)", active: true, art: disk() },
];

function SaveDialog() {
  const [name, setName] = useState("demo_1");
  return (
    <div role="dialog" aria-label="Choose a file name to save the QGIS project file as" className={"absolute top-[53px] left-[150px] flex w-[626px] flex-col border border-[#568f2c] bg-white text-[11px] leading-4 shadow-[0_4px_14px_rgba(0,0,0,0.45)] " + SEGOE}>
      <div className="flex h-[30px] items-center pr-[9px] pl-2">
        <QgisLogo className="size-[17px]" />
        <span className="ml-1 flex-1">Choose a file name to save the QGIS project file as</span>
        <button type="button" aria-label="Close"><svg viewBox="0 0 12 12" className="size-3"><path d="M1 1l10 10M11 1L1 11" stroke="#111" /></svg></button>
      </div>
      <div className="flex h-[37px] items-center pr-3 pb-0.5 pl-[11px] text-[#606060]">
        <button type="button" aria-label="Back" className="mr-[14px]"><Svg className="size-4"><path d="M22 12H4M11 4l-8 8 8 8" stroke="currentColor" strokeWidth="2.500" /></Svg></button>
        <button type="button" aria-label="Forward" className="mr-3"><Svg className="size-4"><path d="M2 12h18M13 4l8 8-8 8" stroke="#d0d0d0" strokeWidth="2.500" /></Svg></button>
        <button type="button" aria-label="Recent" className="mr-[10px]"><Chevron dir="down" className="size-2" /></button>
        <button type="button" aria-label="Up" className="mr-[5px]"><Svg className="size-4"><path d="M12 22V4M4 11l8-8 8 8" stroke="currentColor" strokeWidth="2.500" /></Svg></button>
        <div className="flex h-[22px] w-[290px] items-center border border-[#d9d9d9] pl-[3px] text-black">
          <Folder className="size-4" />
          <span className="ml-[3px] flex w-4 text-[#555]"><Chevron dir="left" className="size-[7px]" /><Chevron dir="left" className="-ml-[2px] size-[7px]" /></span>
          <span>carto_qgis_2018</span>
          <Chevron dir="right" className="mx-2 size-[7px] text-[#555]" />
          <span className="flex-1">qgis_project</span>
          <Chevron dir="down" className="mr-1 size-3 text-[#555]" />
          <button type="button" aria-label="Refresh" className="flex h-[20px] w-5 items-center justify-center border-l border-[#d9d9d9]">
            <Svg className="size-[13px]"><path d="M8 5a8.500 8.500 0 1 0 9 1M8 1v8h7" stroke="#555" strokeWidth="2.800" /></Svg>
          </button>
        </div>
        <div className="ml-3 flex h-[22px] flex-1 items-center border border-[#d9d9d9] pr-2 pl-2">
          <input aria-label="Search" placeholder="Search qgis_project" className="min-w-0 flex-1 outline-none placeholder:text-[#6d6d6d]" />
          <Svg className="size-3"><circle cx="15" cy="9" r="6.500" stroke="#666" strokeWidth="3" /><path d="M10 14l-8 8" stroke="#666" strokeWidth="3.500" /></Svg>
        </div>
      </div>
      <div className="flex h-[31px] items-center border-b border-[#e5e5e5] bg-[#f5f6f7] pr-[15px] pl-[18px] text-[#1e395b]">
        <button type="button" className="flex items-center gap-1">Organize <Caret className="text-[#1e395b]" /></button>
        <button type="button" className="ml-[31px] flex-1 text-left">New folder</button>
        <button type="button" aria-label="Change view" className="flex items-center gap-2">
          <svg viewBox="0 0 18 14" className="h-[14px] w-[18px]" fill="none"><path d="M1.500 1.500h4v11h-4zM1.500 5h4M1.500 9h4M8 2.500h4M14 2.500h3M8 6.500h4M14 6.500h3M8 11.500h4M14 11.500h3" stroke="#8b8b8b" /></svg>
          <Caret className="text-[#1e395b]" />
        </button>
        <button type="button" aria-label="Help" className="ml-[29px] flex size-4 items-center justify-center rounded-full bg-[#0a63c2] font-bold text-white ring-1 ring-[#0b4a8c] ring-inset">?</button>
      </div>
      <div className="flex h-64">
        <ul className="w-[139px] overflow-hidden pt-2">
          {places.map((p) => (
            <li key={p.name} className={(p.active ? "bg-[#d9d9d9] " : "") + (p.root ? "pl-6" : "pl-8")}>
              <button type="button" className="flex h-6 items-center gap-[5px] whitespace-nowrap text-black"><Svg className="size-4">{p.art}</Svg>{p.name}</button>
            </li>
          ))}
        </ul>
        <div className="ml-px flex w-4 flex-col items-center bg-[#f0f0f0] py-1 text-[#505050]">
          <Chevron dir="up" className="size-[10px]" />
          <div className="mt-[93px] h-[91px] w-[14px] bg-[#cdcdcd]" />
          <div className="flex-1" />
          <Chevron dir="down" className="size-[10px]" />
        </div>
        <div className="relative flex min-w-0 flex-1 flex-col pl-[3px]">
          <svg viewBox="0 0 8 5" fill="none" className="absolute top-0 left-[141px] h-[5px] w-2"><path d="M0 4.500l4-4 4 4" stroke="#555" /></svg>
          <table className="w-full table-fixed border-collapse text-left text-[#4c607a]">
            <thead>
              <tr className="h-[26px]">
                <th className="w-[272px] pl-[18px] font-normal">Name</th>
                <th className="w-[120px] border-l border-[#e2e2e2] pl-[6px] font-normal">Date modified</th>
                <th className="border-l border-[#e2e2e2] pl-[6px] font-normal">Type</th>
              </tr>
            </thead>
            <tbody>
              <tr className="h-[44px]"><td colSpan={3} className="text-center text-[#6d6d6d]">No items match your search.</td></tr>
            </tbody>
          </table>
          <div className="flex-1" />
          <div className="flex h-4 items-center bg-[#f0f0f0] pr-[3px] pl-1 text-[#505050]">
            <Chevron dir="left" className="size-[10px]" />
            <div className="ml-1 h-[15px] w-[331px] bg-[#cdcdcd]" />
            <div className="flex-1" />
            <Chevron dir="right" className="size-[10px]" />
          </div>
        </div>
      </div>
      <div className="relative bg-[#f0f0f0] pt-[11px] pb-[13px]">
        <div className="flex items-center pr-[5px]">
          <label htmlFor="fname" className="w-[120px] text-right">File name:</label>
          <span className="ml-[5px] flex h-[23px] flex-1 items-center border border-[#0078d7] bg-white pr-1">
            <input id="fname" value={name} onChange={(e) => setName(e.target.value)} className="min-w-0 flex-1 pl-[5px] outline-none" />
            <Chevron dir="down" className="size-[10px] text-[#555]" />
          </span>
        </div>
        <div className="mt-[2px] flex items-center pr-[5px]">
          <label htmlFor="ftype" className="w-[120px] text-right">Save as type:</label>
          <span className="relative ml-[5px] flex h-[23px] flex-1 items-center border border-[#adadad] bg-[#e1e1e1] pr-1">
            <select id="ftype" className="min-w-0 flex-1 appearance-none pl-[3px] outline-none"><option>QGIS files (*.qgs *.QGS)</option></select>
            <Chevron dir="down" className="pointer-events-none size-[10px] text-[#555]" />
          </span>
        </div>
        <div className="mt-[21px] flex items-center pr-[18px] pl-[11px]">
          <button type="button" className="flex flex-1 items-center gap-1 pt-1">
            <span className="flex size-[17px] items-center justify-center rounded-full border border-[#a9b6d8] bg-linear-to-b from-white to-[#c9d2de]"><svg viewBox="0 0 8 4" className="h-1 w-2"><path d="M0 4h8L4 0z" fill="#1e3a78" /></svg></span>
            Hide Folders
          </button>
          <button type="button" className="h-6 w-[86px] border-2 border-[#0078d7] bg-[#e1e1e1]">Save</button>
          <button type="button" className="ml-[14px] h-6 w-[86px] border border-[#adadad] bg-[#e1e1e1]">Cancel</button>
        </div>
        <svg viewBox="0 0 10 10" className="absolute right-[2px] bottom-[2px] size-[9px]"><path d="M8 0h2v2H8zM8 4h2v2H8zM8 8h2v2H8zM4 4h2v2H4zM4 8h2v2H4zM0 8h2v2H0z" fill="#bdbdbd" /></svg>
      </div>
    </div>
  );
}

/* ---------- status bar and taskbar ---------- */

function Spin({ id, value }: { id: string; value: string }) {
  return (
    <span className="flex h-[21px] w-[76px] overflow-hidden rounded-sm border border-[#8f8f8f] bg-white">
      <input id={id} defaultValue={value} className="w-[59px] pt-0.5 pl-1 outline-none" />
      <span className="flex w-4 flex-col border-l border-[#8f8f8f] bg-[#f2f2f2]">
        <button type="button" aria-label="Increase" className="flex flex-1 items-center justify-center border-b border-[#8f8f8f]"><svg viewBox="0 0 9 5" className="h-1 w-2"><path d="M0 5h9L4.500 0z" /></svg></button>
        <button type="button" aria-label="Decrease" className="flex flex-1 items-center justify-center"><svg viewBox="0 0 9 5" className="h-1 w-2"><path d="M0 0h9L4.500 5z" /></svg></button>
      </span>
    </span>
  );
}

function StatusBar() {
  return (
    <footer className="flex h-8 items-center justify-end pr-4 pt-0.5 leading-4">
      <label htmlFor="coord" className="w-[57px] pt-px whitespace-nowrap">Coordinate</label>
      <input id="coord" defaultValue="-101911,2590518" className="h-[21px] w-[121px] rounded-sm border border-[#a5a5a5] bg-white pt-0.5 text-center outline-none" />
      <span className="flex w-[34px] pl-[5px]"><Svg className="size-4"><path d="M3 4c4-4 7 0 5 4M7 14L16 3M2 10l9 11M4 7l14 14M10 16l9-10M8 21c6 2 12-2 14-8M14 4l8 6" stroke="#333" strokeWidth="2" /></Svg></span>
      <label htmlFor="scale" className="w-[29px] pt-px">Scale</label>
      <span className="flex h-[21px] w-[89px] overflow-hidden rounded-sm border border-[#8f8f8f] bg-white">
        <input id="scale" defaultValue="1:3,052,164" className="w-[71px] pt-0.5 pl-1 outline-none" />
        <button type="button" aria-label="Choose scale" className="flex w-4 items-center justify-center border-l border-[#aaa] bg-[#f2f2f2]"><Caret /></button>
      </span>
      <span className="flex w-[34px] pl-[5px]"><Svg className="size-[17px]"><path d="M6 12V7q0-5 6-5t6 5v5" stroke="#8a8a8a" strokeWidth="2.500" /><rect x="4" y="11" width="16" height="12" rx="1.500" fill="#555" /></Svg></span>
      <label htmlFor="mag" className="w-12 pt-px">Magnifier</label>
      <Spin id="mag" value="100%" />
      <label htmlFor="rot" className="w-[60px] pt-px pl-[9px]">Rotation</label>
      <Spin id="rot" value="0.0" />
      <span className="ml-[7px] flex w-[54px] items-center gap-1"><XBox label="Render" />Render</span>
      <span className="ml-[17px] flex w-[90px] items-center gap-[3px]"><Svg className="size-4"><circle cx="12" cy="12" r="11" fill="#777" /><path d="M12 2v20M2 12h20M7 4c-2 6-2 10 0 16M17 4c2 6 2 10 0 16" stroke="#ddd" /></Svg><span className="pt-px">EPSG:3826</span></span>
      <Svg className="ml-[3px] size-[17px]"><path d="M12 2c7 0 11 4 11 9s-3 7-5 8l3 4c-4 0-7-2-8-3C5 20 1 16 1 11s4-9 11-9z" fill="#555" /><g fill="#fff"><circle cx="7" cy="11" r="1.700" /><circle cx="12" cy="11" r="1.700" /><circle cx="17" cy="11" r="1.700" /></g></Svg>
    </footer>
  );
}

function Taskbar() {
  return (
    <div className={"flex h-10 items-center bg-black text-[11px] leading-4 text-white " + SEGOE}>
      <ToolButton label="Start" className="w-12"><Svg className="size-4"><path d="M0 3.500l10-1.500v9.500H0zM11.500 1.800L24 0v11.500H11.500zM0 13h10v9.500L0 21zM11.500 13H24v11.500l-12.500-1.800z" fill="#fff" /></Svg></ToolButton>
      <ToolButton label="Search" className="w-12"><Svg className="size-4"><circle cx="15" cy="8.500" r="7.500" stroke="#fff" strokeWidth="1.800" /><path d="M10 14L1 23" stroke="#fff" strokeWidth="1.800" /></Svg></ToolButton>
      <ToolButton label="Task view" className="w-12"><svg viewBox="0 0 20 16" fill="none" className="h-4 w-5"><path d="M4.500 1.500h11v13h-11zM3 3.500H.5v9H3M17 3.500h2.500v9H17" stroke="#fff" /></svg></ToolButton>
      <button type="button" aria-label="File Explorer" className="ml-1.5 flex h-10 w-10 items-center justify-center border-b-2 border-[#a3cf62] pt-0.5">
        <Svg className="size-[22px]"><path d="M1 2h8l2 2h12v17H1z" fill="#f5d67a" /><path d="M1 7h22v14H1z" fill="#ffe9a3" /><path d="M5 21v-8h14v8h-4v-4H9v4z" fill="#2eb1ea" /></Svg>
      </button>
      <button type="button" aria-label="QGIS" className="ml-[5px] flex h-10 w-12 items-center justify-center border-b-2 border-[#a3cf62] bg-[#333] pt-0.5"><QgisLogo className="size-[22px]" /></button>
      <div className="flex-1" />
      <svg viewBox="0 0 12 7" fill="none" className="h-[7px] w-3"><path d="M.5 6.500L6 1l5.500 5.500" stroke="#fff" strokeWidth="1.300" /></svg>
      <div className="ml-[10px] flex items-center gap-2">
        <Svg className="size-4"><path d="M1 3h8M3 0v3M7 0v3M2 3v4q0 3 3 3t3-3V3M5 10v8h4" stroke="#fff" strokeWidth="1.600" /><path d="M9 8h13v10H9z" fill="#fff" stroke="#fff" /><path d="M23 11v4" stroke="#fff" strokeWidth="2" /></Svg>
        <Svg className="size-4"><path d="M7 4h16v12H7M15 16v5M10 21.500h10M1 2h7v6H1zM4.500 8v14" stroke="#fff" strokeWidth="1.600" /></Svg>
        <Svg className="size-4"><path d="M1 9h3l5-5v17l-5-5H1z" stroke="#fff" strokeWidth="1.500" /><path d="M13 9q2 3 0 6M16 6q5 6 0 12M20 3q7 9 0 18" stroke="#fff" strokeWidth="1.600" /></Svg>
        <Svg className="size-4"><path d="M0 1h24v17h-7l-5 6v-6H0z" fill="#fff" /><path d="M5 6h14M5 9.500h14M5 13h9" stroke="#000" strokeWidth="1.500" /></Svg>
      </div>
      <span className="ml-[10px] w-7">ENG</span>
      <div className="ml-2 w-[64px] text-center leading-[17px] whitespace-nowrap"><div>16:23</div><div>10/01/2018</div></div>
      <div className="ml-[13px] h-10 w-px bg-[#555]" />
    </div>
  );
}

const menus = ["Project", "Edit", "View", "Layer", "Settings", "Plugins", "Vector", "Raster", "Database", "Web", "Processing", "Help"];

export default function App() {
  return (
    <div className={"relative flex min-h-screen flex-col overflow-hidden bg-[#f0f0f0] text-[11px] text-black " + TAHOMA}>
      <header className={"flex h-6 items-center bg-white pl-0.5 text-[#9a9a9a] " + SEGOE}>
        <QgisLogo className="size-[17px]" />
        <h1 className="ml-1 flex-1">QGIS 2.18.15</h1>
        <ToolButton label="Minimize" className="w-[46px]"><svg viewBox="0 0 10 10" className="size-[10px]"><path d="M0 5.500h10" stroke="#888" /></svg></ToolButton>
        <ToolButton label="Restore" className="w-[46px]"><svg viewBox="0 0 10 10" fill="none" className="size-[10px]"><path d="M.5 2.500h7v7h-7zM2.500 2.500v-2h7v7h-2" stroke="#888" /></svg></ToolButton>
        <ToolButton label="Close window" className="mr-0.5 w-[46px]"><svg viewBox="0 0 10 10" className="size-[10px]"><path d="M0 0l10 10M10 0L0 10" stroke="#888" /></svg></ToolButton>
      </header>
      <nav className="flex h-[22px] items-center gap-[14px] border-b border-[#b4b4b4] pt-0.5 pl-[9px]">
        {menus.map((m) => <button key={m} type="button">{m}</button>)}
      </nav>
      <ToolbarOne />
      <ToolbarTwo />
      <main className="flex flex-1">
        <SideTools />
        <div className="flex w-[302px] shrink-0 flex-col">
          <BrowserPanel />
          <LayersPanel />
        </div>
        <div className="h-[524px] min-w-0 flex-1 border-t-3 border-l border-double border-[#b4b4b4] bg-white"><MapCanvas /></div>
      </main>
      <StatusBar />
      <Taskbar />
      <SaveDialog />
    </div>
  );
}
